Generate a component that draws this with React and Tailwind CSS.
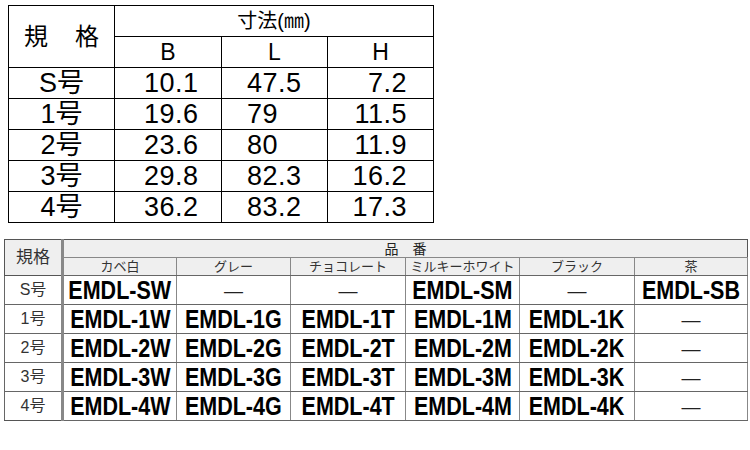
import React from 'react';

const sizes = [
  { name: 'S号', b: '10.1', l: '47.5', h: '7.2' },
  { name: '1号', b: '19.6', l: '79', h: '11.5' },
  { name: '2号', b: '23.6', l: '80', h: '11.9' },
  { name: '3号', b: '29.8', l: '82.3', h: '16.2' },
  { name: '4号', b: '36.2', l: '83.2', h: '17.3' },
];

const colors = ['カベ白', 'グレー', 'チョコレート', 'ミルキーホワイト', 'ブラック', '茶'];

const codes = [
  { name: 'S号', items: ['EMDL-SW', null, null, 'EMDL-SM', null, 'EMDL-SB'] },
  { name: '1号', items: ['EMDL-1W', 'EMDL-1G', 'EMDL-1T', 'EMDL-1M', 'EMDL-1K', null] },
  { name: '2号', items: ['EMDL-2W', 'EMDL-2G', 'EMDL-2T', 'EMDL-2M', 'EMDL-2K', null] },
  { name: '3号', items: ['EMDL-3W', 'EMDL-3G', 'EMDL-3T', 'EMDL-3M', 'EMDL-3K', null] },
  { name: '4号', items: ['EMDL-4W', 'EMDL-4G', 'EMDL-4T', 'EMDL-4M', 'EMDL-4K', null] },
];

const font = { fontFamily: '"Liberation Sans", "Noto Sans CJK JP", sans-serif' };

const App = () => {
  return (
    <div className="w-[750px] h-[450px] bg-white text-black overflow-hidden" style={font}>
      {/* Dimensions table */}
      <table className="ml-[8px] mt-[5px] table-fixed border-collapse w-[425px]">
        <colgroup>
          <col className="w-[106px]" />
          <col className="w-[107px]" />
          <col className="w-[106px]" />
          <col className="w-[106px]" />
        </colgroup>
        <tbody>
          <tr className="h-[31px]">
            <td rowSpan={2} className="border border-black p-0">
              <div className="flex justify-between px-[15px] text-[24px] leading-none">
                <span>規</span>
                <span>格</span>
              </div>
            </td>
            <td colSpan={3} className="border border-black p-0 text-center text-[20px] leading-none">
              寸法(㎜)
            </td>
          </tr>
          <tr className="h-[31px]">
            <td className="border border-black p-0 text-center text-[23px] leading-none">B</td>
            <td className="border border-black p-0 text-center text-[23px] leading-none">L</td>
            <td className="border border-black p-0 text-center text-[23px] leading-none">H</td>
          </tr>
          {sizes.map((row) => (
            <tr key={row.name} className="h-[31px] text-[27px] leading-none">
              <td className="border border-black p-0 text-center">{row.name}</td>
              <td className="border border-black p-0 pl-[29px] tracking-[0.5px]">{row.b}</td>
              <td className="border border-black p-0 pl-[25px] tracking-[0.5px]">{row.l}</td>
              <td className="border border-black p-0 pr-[26px] text-right tracking-[0.5px]">{row.h}</td>
            </tr>
          ))}
        </tbody>
      </table>

      {/* Part number table */}
      <table className="ml-[4px] mt-[16px] table-fixed border-collapse w-[743px]">
        <colgroup>
          <col className="w-[58px]" />
          <col className="w-[114px]" />
          <col className="w-[114px]" />
          <col className="w-[115px]" />
          <col className="w-[114px]" />
          <col className="w-[115px]" />
          <col className="w-[113px]" />
        </colgroup>
        <tbody>
          <tr className="h-[18px] bg-[#efefef]">
            <td rowSpan={2} className="border border-[#555] border-r-[3px] border-r-[#888] border-r-double p-0 text-center text-[17px] text-[#333] leading-none">
              規格
            </td>
            <td colSpan={6} className="border border-[#555] border-b-[#888] p-0 text-center text-[14px] text-[#222] leading-none">
              <span className="tracking-[14px] pl-[14px]">品番</span>
            </td>
          </tr>
          <tr className="h-[18px] bg-[#efefef]">
            {colors.map((c) => (
              <td key={c} className="border border-[#888] border-b-[#666] p-0 align-bottom text-center text-[13px] text-[#333] leading-[16px] whitespace-nowrap">
                {c}
              </td>
            ))}
          </tr>
          {codes.map((row, i) => (
            <tr key={row.name} className="h-[29px]">
              <td className={`border border-[#666] border-r-[3px] border-r-[#888] border-r-double p-0 text-center text-[16px] text-[#333] leading-none ${i === codes.length - 1 ? 'border-b-[#555]' : ''}`}>
                {row.name}
              </td>
              {row.items.map((code, j) => (
                <td
                  key={j}
                  className="border border-[#666] border-l-[#888] border-r-[#888] p-0 text-center leading-none whitespace-nowrap overflow-visible"
                >
                  {code ? (
                    <span className="inline-block -mx-[10px] text-[25px] font-bold scale-x-[0.86] whitespace-nowrap">{code}</span>
                  ) : (
                    <span className="text-[19px] text-[#222]">—</span>
                  )}
                </td>
              ))}
            </tr>
          ))}
        </tbody>
      </table>
    </div>
  );
};

export default App;
